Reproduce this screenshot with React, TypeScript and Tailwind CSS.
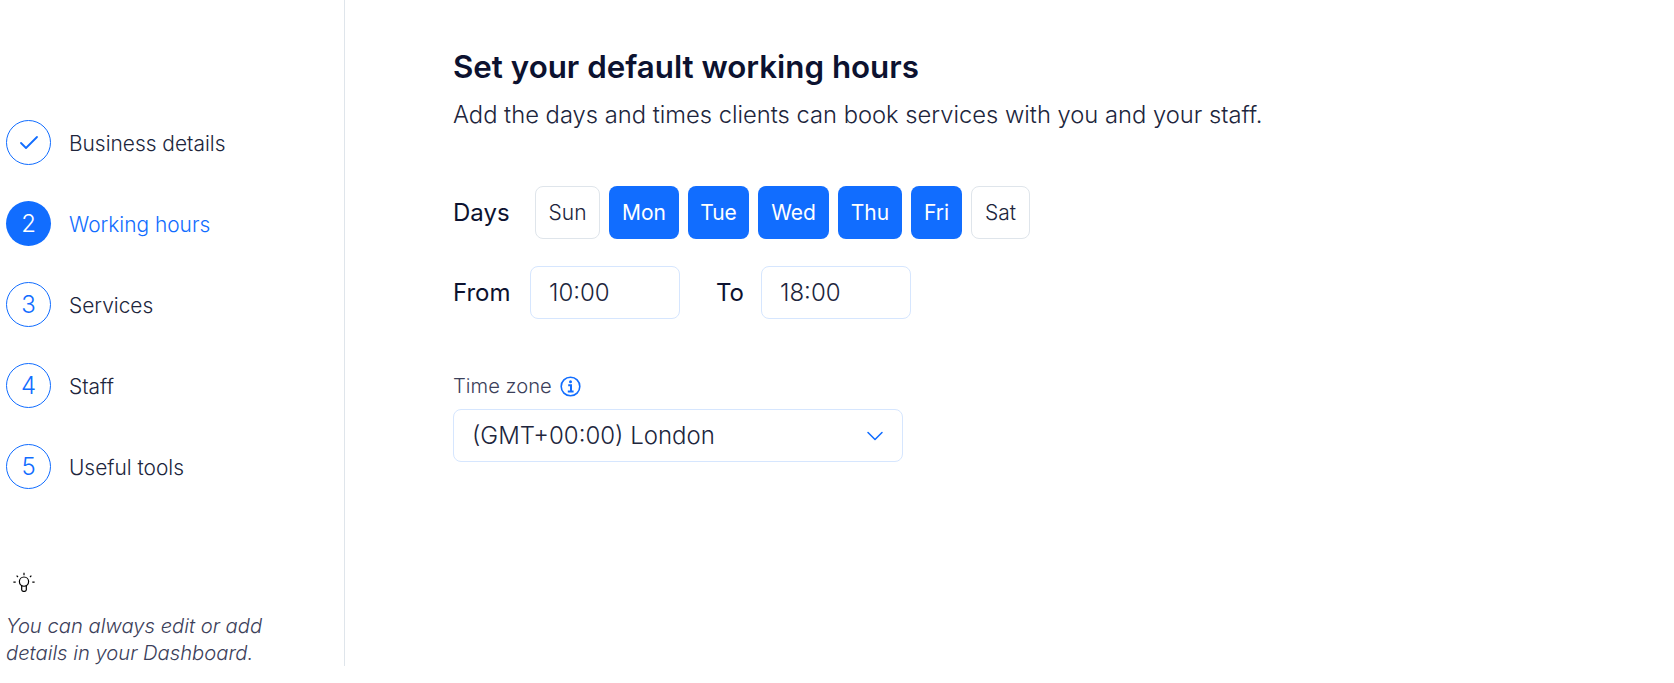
import { Check, ChevronDown } from "lucide-react";

const steps = [
  { label: "Business details", mark: "done" },
  { label: "Working hours", mark: "2", active: true },
  { label: "Services", mark: "3" },
  { label: "Staff", mark: "4" },
  { label: "Useful tools", mark: "5" },
];

const days = [
  { label: "Sun", width: "w-[65px]" },
  { label: "Mon", width: "w-[70px]", on: true },
  { label: "Tue", width: "w-[61px]", on: true },
  { label: "Wed", width: "w-[71px]", on: true },
  { label: "Thu", width: "w-[64px]", on: true },
  { label: "Fri", width: "w-[51px]", on: true },
  { label: "Sat", width: "w-[59px]" },
];

function Step({ label, mark, active }: { label: string; mark: string; active?: boolean }) {
  return (
    <div className="flex h-[45px] items-center">
      <div
        className={
          active
            ? "flex h-[45px] w-[45px] items-center justify-center rounded-full bg-[#116dff] pt-[1px] text-[24px] font-light text-white"
            : "flex h-[45px] w-[45px] items-center justify-center rounded-full border border-[#116dff] pt-[1px] text-[24px] font-light text-[#116dff]"
        }
      >
        {mark === "done" ? <Check className="h-[24px] w-[24px]" strokeWidth={1.8} /> : mark}
      </div>
      <span
        className={
          active
            ? "ml-[18px] pt-[2px] text-[20.9px] font-light text-[#116dff]"
            : "ml-[18px] pt-[2px] text-[20.9px] font-light text-[#20253c]"
        }
      >
        {label}
      </span>
    </div>
  );
}

function TimeInput({ value }: { value: string }) {
  return (
    <div className="flex h-[53px] w-[150px] items-center rounded-lg border border-[#d6e6fe] pl-[18px] text-[24px] font-light text-[#20253c]">
      {value}
    </div>
  );
}

export default function App() {
  return (
    <div className="flex h-[683px] bg-white font-['Inter',sans-serif]">
      <aside className="flex h-[666px] w-[345px] shrink-0 flex-col border-r border-[#dfe5eb] pl-[6px]">
        <div className="mt-[120px] flex flex-col gap-[36px]">
          {steps.map((step) => (
            <Step key={step.label} {...step} />
          ))}
        </div>
        <svg
          className="ml-[5px] mt-[82px] h-[26px] w-[26px] text-black"
          viewBox="0 0 26 26"
          fill="none"
          stroke="currentColor"
          strokeWidth="1.3"
        >
          <circle cx="13" cy="11.5" r="5" />
          <path d="M10.5 16v4.5a2 2 0 0 0 2 1.5h1a2 2 0 0 0 2-1.5V16" />
          <path d="M13 2v2.5M5 5l1.5 1.5M21 5l-1.5 1.5M1.5 12H4M22 12h2.5" />
        </svg>
        <p className="mt-[17px] text-[20.2px] leading-[27px] font-light text-[#3b405a] italic">
          You can always edit or add
          <br />
          details in your Dashboard.
        </p>
      </aside>
      <main className="pl-[108px]">
        <h1 className="mt-[47px] text-[31.3px] leading-[40px] font-semibold text-[#0c1230]">
          Set your default working hours
        </h1>
        <p className="mt-[12px] text-[23.74px] leading-[32px] font-light text-[#20253c]">
          Add the days and times clients can book services with you and your staff.
        </p>
        <div className="mt-[55px] flex items-center">
          <span className="w-[82px] text-[24px] font-normal text-[#0c1230]">Days</span>
          <div className="flex gap-[9px]">
            {days.map((day) => (
              <div
                key={day.label}
                className={
                  day.on
                    ? `flex h-[53px] ${day.width} items-center justify-center rounded-lg bg-[#116dff] text-[21px] text-white`
                    : `flex h-[53px] ${day.width} items-center justify-center rounded-lg border border-[#dfe5eb] text-[21px] font-light text-[#20253c]`
                }
              >
                {day.label}
              </div>
            ))}
          </div>
        </div>
        <div className="mt-[27px] flex items-center">
          <span className="w-[77px] pt-[1px] text-[24px] text-[#0c1230]">From</span>
          <TimeInput value="10:00" />
          <span className="ml-[36px] w-[45px] pt-[1px] text-[24px] text-[#0c1230]">To</span>
          <TimeInput value="18:00" />
        </div>
        <div className="mt-[54px] flex h-[26px] items-center text-[20.2px] font-light text-[#3b405a]">
          Time zone
          <svg
            className="ml-[8px] h-[21px] w-[21px] text-[#116dff]"
            viewBox="0 0 21 21"
            fill="none"
            stroke="currentColor"
          >
            <circle cx="10.5" cy="10.5" r="9.3" strokeWidth="1.6" />
            <path d="M8.2 9.2h2.8v5.8M7.8 15.5h5.8" strokeWidth="2" />
            <circle cx="10.5" cy="5.8" r="1.5" fill="currentColor" stroke="none" />
          </svg>
        </div>
        <div className="mt-[10px] flex h-[53px] w-[450px] items-center justify-between rounded-lg border border-[#d6e6fe] pl-[18px] pr-[13px] text-[24px] font-light text-[#20253c]">
          (GMT+00:00) London
          <ChevronDown className="h-[28px] w-[28px] text-[#116dff]" strokeWidth={1.3} />
        </div>
      </main>
    </div>
  );
}
